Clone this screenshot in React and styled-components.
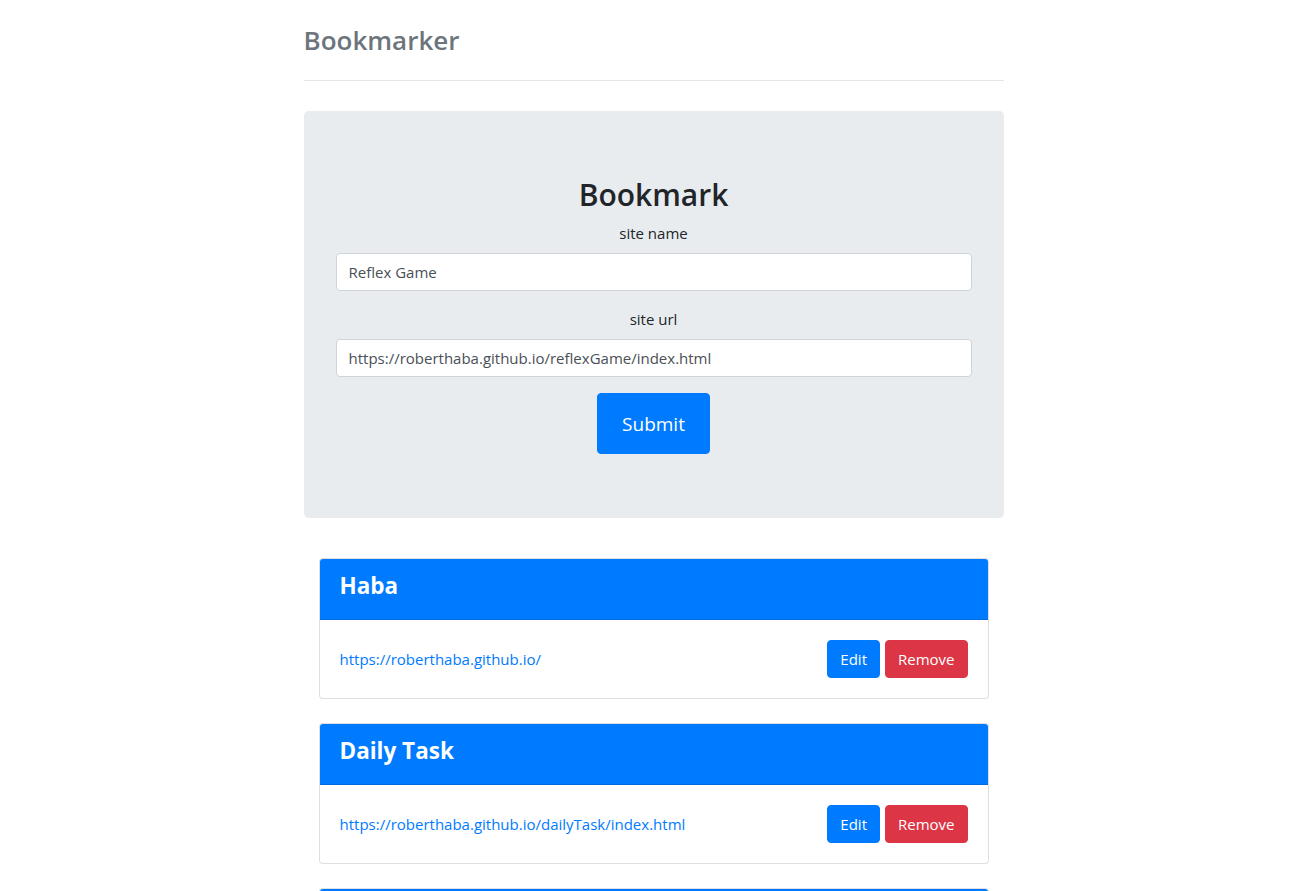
import React from 'react';
import styled, { createGlobalStyle } from 'styled-components';

const GlobalStyle = createGlobalStyle`
    body {
        margin: 0;
        background: #fff;
        color: #212529;
        font-family: 'Open Sans', 'Noto Sans', sans-serif;
        font-size: 15px;
        line-height: 1.5;
    }
    * { box-sizing: border-box; }
`

const bookmarks = [
    { name: 'Haba', url: 'https://roberthaba.github.io/' },
    { name: 'Daily Task', url: 'https://roberthaba.github.io/dailyTask/index.html' },
    { name: 'Reflex Game', url: 'https://roberthaba.github.io/reflexGame/index.html' },
]

const App = () => {
    return (
        <>
            <GlobalStyle />
            <Container>
                <Header>
                    <Brand>Bookmarker</Brand>
                </Header>

                <Jumbotron>
                    <Title>Bookmark</Title>
                    <FormGroup>
                        <Label>site name</Label>
                        <Input defaultValue="Reflex Game" />
                    </FormGroup>
                    <FormGroup>
                        <Label>site url</Label>
                        <Input defaultValue="https://roberthaba.github.io/reflexGame/index.html" />
                    </FormGroup>
                    <SubmitButton>Submit</SubmitButton>
                </Jumbotron>

                <List>
                    {bookmarks.map((b) => (
                        <Card key={b.name}>
                            <CardHeader>
                                <CardTitle>{b.name}</CardTitle>
                            </CardHeader>
                            <CardBody>
                                <SiteLink href={b.url}>{b.url}</SiteLink>
                                <Actions>
                                    <Btn>Edit</Btn>
                                    <Btn danger>Remove</Btn>
                                </Actions>
                            </CardBody>
                        </Card>
                    ))}
                </List>
            </Container>
        </>
    );
};

const Container = styled.div`
    width: 700px;
    margin: 0 auto;
    padding-top: 16px;
`
const Header = styled.div`
    padding-bottom: 16px;
    border-bottom: 1px solid #e5e5e5;
`
const Brand = styled.h3`
    margin: 0;
    font-size: 26px;
    line-height: 48px;
    font-weight: 600;
    color: #6c757d;
`
const Jumbotron = styled.div`
    margin-top: 30px;
    padding: 64px 32px;
    background: #e9ecef;
    border-radius: 4.8px;
    text-align: center;
`
const Title = styled.h2`
    margin: 0 0 7px;
    padding-top: 1px;
    font-size: 30px;
    line-height: 38px;
    font-weight: 600;
`
const FormGroup = styled.div`
    margin-bottom: 16px;
`
const Label = styled.label`
    display: block;
    margin-bottom: 8px;
    font-size: 15px;
    line-height: 24px;
`
const Input = styled.input`
    display: block;
    width: 100%;
    height: 38px;
    padding: 6px 12px;
    font: inherit;
    font-size: 15px;
    color: #495057;
    background: #fff;
    border: 1px solid #ced4da;
    border-radius: 4px;
`
const SubmitButton = styled.button`
    font: inherit;
    font-size: 19px;
    line-height: 30px;
    padding: 14.5px 24px;
    color: #fff;
    background: #007bff;
    border: 1px solid #007bff;
    border-radius: 4px;
`
const List = styled.div`
    margin: 40px 15px 0;
    display: flex;
    flex-direction: column;
    gap: 24px;
`
const Card = styled.div`
    border: 1px solid rgba(0, 0, 0, 0.125);
    border-radius: 4px;
    overflow: hidden;
    background: #fff;
`
const CardHeader = styled.div`
    background: #007bff;
    color: #fff;
    padding: 12px 20px;
    border-bottom: 1px solid rgba(0, 0, 0, 0.125);
`
const CardTitle = styled.h3`
    margin: 0 0 7px;
    padding-top: 1px;
    font-size: 22.5px;
    line-height: 28px;
    font-weight: 700;
`
const CardBody = styled.div`
    padding: 20px;
    display: flex;
    align-items: center;
    justify-content: space-between;
`
const SiteLink = styled.a`
    color: #007bff;
    text-decoration: none;
    font-size: 15px;
`
const Actions = styled.div`
    display: flex;
    gap: 5px;
`
const Btn = styled.button`
    font: inherit;
    font-size: 15px;
    line-height: 24px;
    padding: 6px 12px;
    color: #fff;
    background: ${(p) => (p.danger ? '#dc3545' : '#007bff')};
    border: 1px solid ${(p) => (p.danger ? '#dc3545' : '#007bff')};
    border-radius: 4px;
`

export default App;
